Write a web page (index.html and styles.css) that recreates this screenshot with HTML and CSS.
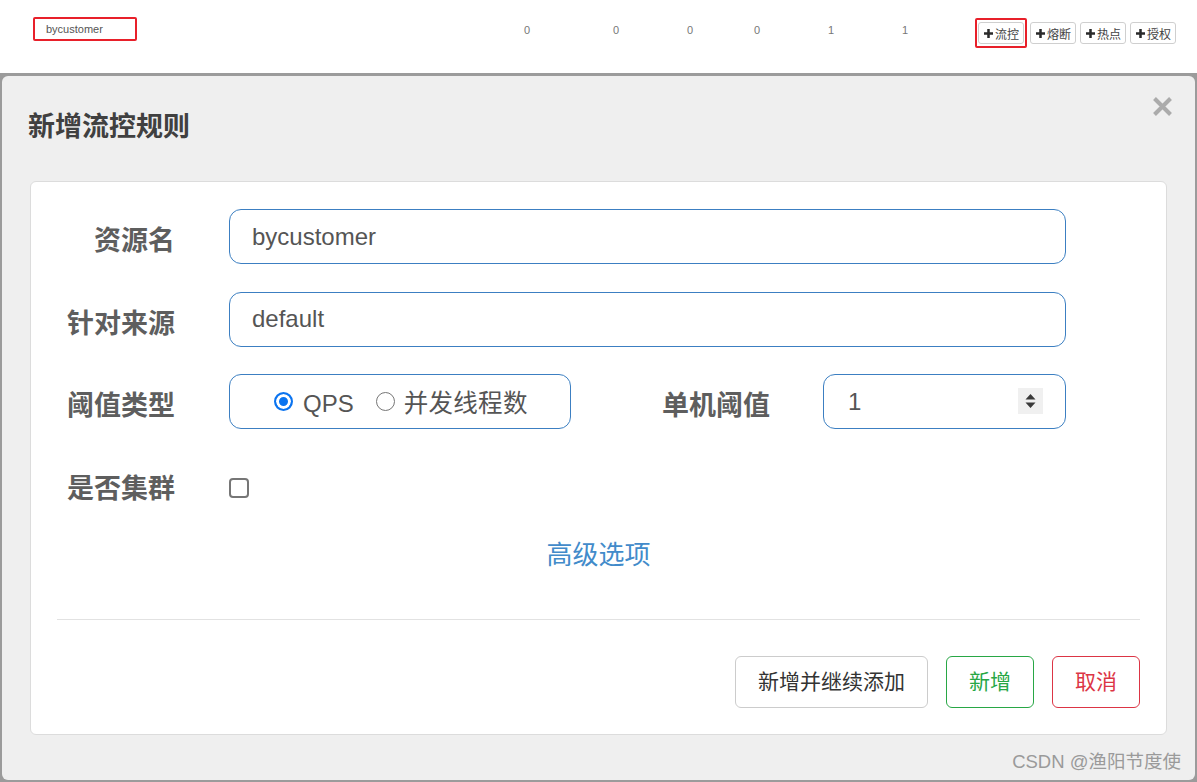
FILE: index.html
```html
<!DOCTYPE html>
<html lang="zh">
<head>
<meta charset="utf-8">
<title>新增流控规则</title>
<link rel="stylesheet" href="styles.css">
</head>
<body>
<div class="page">
  <div class="topbar">
    <div class="name-cell"><span class="name-box">bycustomer</span></div>
    <span class="num w89">0</span>
    <span class="num w74">0</span>
    <span class="num w67">0</span>
    <span class="num w74">0</span>
    <span class="num w74">1</span>
    <span class="num w73">1</span>
    <div class="ops">
      <span class="hl-wrap"><button class="op-btn"><svg class="plus" viewBox="0 0 10 10" width="9" height="9"><path d="M3.6 0h2.8v3.6H10v2.8H6.4V10H3.6V6.4H0V3.6h3.6z"/></svg>流控</button></span>
      <button class="op-btn"><svg class="plus" viewBox="0 0 10 10" width="9" height="9"><path d="M3.6 0h2.8v3.6H10v2.8H6.4V10H3.6V6.4H0V3.6h3.6z"/></svg>熔断</button>
      <button class="op-btn"><svg class="plus" viewBox="0 0 10 10" width="9" height="9"><path d="M3.6 0h2.8v3.6H10v2.8H6.4V10H3.6V6.4H0V3.6h3.6z"/></svg>热点</button>
      <button class="op-btn"><svg class="plus" viewBox="0 0 10 10" width="9" height="9"><path d="M3.6 0h2.8v3.6H10v2.8H6.4V10H3.6V6.4H0V3.6h3.6z"/></svg>授权</button>
    </div>
  </div>

  <div class="backdrop">
    <div class="modal">
      <div class="modal-header">
        <h4 class="modal-title">新增流控规则</h4>
        <span class="close" aria-label="关闭"><svg viewBox="0 0 21 21" width="21" height="21"><path d="M2.5 2.5L18.5 18.5M18.5 2.5L2.5 18.5"/></svg></span>
      </div>

      <div class="card">
        <div class="form-row">
          <label class="lbl">资源名</label>
          <div class="field wide">bycustomer</div>
        </div>
        <div class="form-row">
          <label class="lbl">针对来源</label>
          <div class="field wide">default</div>
        </div>
        <div class="form-row">
          <label class="lbl">阈值类型</label>
          <div class="field radio-box">
            <span class="radio checked"></span><span class="radio-text">QPS</span>
            <span class="radio"></span><span class="radio-text cjk">并发线程数</span>
          </div>
          <label class="lbl lbl2">单机阈值</label>
          <div class="field num-field">
            <span>1</span>
            <span class="spinner"><svg viewBox="0 0 25 26" width="25" height="26"><path d="M7.5 11.5h10L12.5 6z M7.5 14.5h10L12.5 20z"/></svg></span>
          </div>
        </div>
        <div class="form-row last-row">
          <label class="lbl">是否集群</label>
          <span class="checkbox"></span>
        </div>

        <div class="adv"><a class="adv-link">高级选项</a></div>
        <hr class="divider">
        <div class="actions">
          <button class="btn btn-default">新增并继续添加</button>
          <button class="btn btn-success">新增</button>
          <button class="btn btn-danger">取消</button>
        </div>
      </div>

      <div class="watermark">CSDN @渔阳节度使</div>
    </div>
  </div>
</div>
</body>
</html>
```

FILE: styles.css
```css
* { box-sizing: border-box; }

html, body {
  margin: 0;
  padding: 0;
  background: #ffffff;
  font-family: "Liberation Sans", "Noto Sans CJK SC", sans-serif;
}

.page {
  width: 1197px;
  height: 782px;
  overflow: hidden;
}

/* ---------- top table row ---------- */
.topbar {
  height: 73px;
  display: flex;
  align-items: flex-start;
  background: #fff;
}

.name-cell {
  width: 524px;
  padding-left: 33px;
  padding-top: 17px;
}

.name-box {
  display: block;
  width: 104px;
  height: 24px;
  border: 2px solid #e8202a;
  border-radius: 2px;
  padding-left: 11px;
  font-size: 11px;
  line-height: 20px;
  color: #555;
}

.num {
  margin-top: 23px;
  font-size: 11px;
  line-height: 14px;
  color: #777;
}
.w89 { width: 89px; }
.w74 { width: 74px; }
.w67 { width: 67px; }
.w73 { width: 73px; }

.ops {
  display: flex;
  align-items: flex-start;
  margin-top: 18px;
  gap: 4px;
}

.hl-wrap {
  display: block;
  border: 2px solid #e8202a;
  border-radius: 2px;
  padding: 2px 1px 2px 1px;
  margin-right: -1px;
}

.op-btn {
  display: flex;
  align-items: center;
  height: 22px;
  padding: 0 4px 0 5px;
  border: 1px solid #cfcfcf;
  border-radius: 3px;
  background: #fff;
  font-family: "Noto Sans CJK SC", sans-serif;
  font-size: 12px;
  color: #444;
  gap: 2px;
}
.ops > .op-btn { margin-top: 4px; }

.plus { fill: #2a2a2a; }

/* ---------- backdrop & modal ---------- */
.backdrop {
  height: 709px;
  background: #9b9b9b;
  padding: 3px 2px 2px 2px;
}

.modal {
  position: relative;
  height: 704px;
  background: #efefef;
  border-radius: 6px;
  padding: 0 28px;
}

.modal-header {
  height: 105px;
  padding-top: 31px;
}

.modal-title {
  margin: 0 0 0 -2px;
  font-family: "Noto Sans CJK SC", sans-serif;
  font-size: 27px;
  font-weight: 700;
  line-height: 36px;
  color: #404040;
}

.close {
  position: absolute;
  top: 20px;
  right: 22px;
  width: 21px;
  height: 21px;
}
.close svg path {
  stroke: #ababab;
  stroke-width: 4;
  fill: none;
}

.card {
  background: #fff;
  border: 1px solid #dcdcdc;
  border-radius: 6px;
  padding: 27px 26px 26px 26px;
}

/* ---------- form ---------- */
.form-row {
  display: flex;
  align-items: center;
  height: 55px;
  margin-bottom: 27.5px;
}
.last-row { margin-bottom: 0; }

.lbl {
  width: 118px;
  margin-right: 54px;
  margin-top: 5px;
  text-align: right;
  font-family: "Noto Sans CJK SC", sans-serif;
  font-size: 27px;
  font-weight: 700;
  line-height: 36px;
  color: #5e5e5e;
  white-space: nowrap;
}

.lbl2 {
  width: 199px;
  margin-right: 53px;
}

.field {
  height: 55px;
  border: 1px solid #3c7fc2;
  border-radius: 12px;
  display: flex;
  align-items: center;
  font-size: 24px;
  color: #555;
  font-family: "Liberation Sans", "Noto Sans CJK SC", sans-serif;
}

.wide {
  width: 837px;
  padding-left: 22px;
}

.radio-box {
  width: 342px;
  padding-left: 44px;
  padding-top: 4px;
}

.radio {
  width: 19px;
  height: 19px;
  border-radius: 50%;
  border: 1.5px solid #767676;
  background: #fff;
  flex: none;
  margin-bottom: 4px;
}
.radio.checked {
  border: 2px solid #0b74f0;
  background: #0b74f0;
  box-shadow: inset 0 0 0 3px #fff;
}

.radio-text {
  margin-left: 10px;
  margin-right: 22px;
  line-height: 30px;
}
.radio-text.cjk {
  margin-left: 9px;
  margin-right: 0;
  font-size: 24.5px;
  letter-spacing: 0.3px;
}

.num-field {
  width: 243px;
  padding-left: 24px;
  padding-right: 22px;
  justify-content: space-between;
}

.spinner {
  display: block;
  width: 25px;
  height: 26px;
  background: #f0f0f0;
  margin-top: -2px;
}
.spinner svg path { fill: #3a3a3a; }

.checkbox {
  display: block;
  width: 20px;
  height: 20px;
  border: 2px solid #767676;
  border-radius: 4px;
  margin-top: 7px;
}

.adv {
  margin-top: 23px;
  height: 36px;
  text-align: center;
}

.adv-link {
  font-family: "Noto Sans CJK SC", sans-serif;
  font-size: 26px;
  line-height: 36px;
  color: #428bca;
  cursor: pointer;
}

.divider {
  margin: 48px 0 0 0;
  border: 0;
  border-top: 1px solid #e2e2e2;
  height: 0;
}

.actions {
  margin-top: 36px;
  display: flex;
  justify-content: flex-end;
  gap: 18px;
}

.btn {
  height: 52px;
  padding: 0 22px;
  border-radius: 6px;
  background: #fff;
  font-family: "Noto Sans CJK SC", sans-serif;
  font-size: 21px;
  line-height: 30px;
  padding-bottom: 3px;
}
.btn-default { border: 1px solid #cccccc; color: #333; }
.btn-success { border: 1px solid #28a745; color: #28a745; }
.btn-danger  { border: 1px solid #dc3545; color: #dc3545; }

.watermark {
  position: absolute;
  right: 14px;
  bottom: 6px;
  font-family: "Liberation Sans", "Noto Sans CJK SC", sans-serif;
  font-size: 18.5px;
  line-height: 24px;
  color: #9a9a9a;
}
```
